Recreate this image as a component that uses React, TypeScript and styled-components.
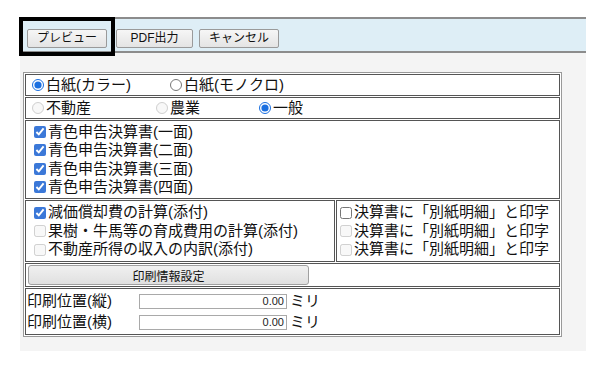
import styled, { createGlobalStyle } from "styled-components"

const GlobalStyle = createGlobalStyle`
  body {
    margin: 0;
    background: #fff;
    font-family: "Liberation Sans", "Noto Sans CJK JP", sans-serif;
    color: #111;
  }
`

const Panel = styled.div`
  margin: 17px 0 0 20px;
  width: 566px;
  background: #f4f4f4;
  padding-bottom: 14px;
`

const Toolbar = styled.div`
  position: relative;
  height: 36px;
  box-sizing: border-box;
  border-top: 2px solid #8c8c8c;
  border-bottom: 2px solid #8c8c8c;
  background: #deeef6;
  display: flex;
  align-items: flex-start;
  padding: 10px 0 0 7px;
`

const ToolButton = styled.button<{ $w: number; $gap: number }>`
  width: ${p => p.$w}px;
  height: 19px;
  margin-right: ${p => p.$gap}px;
  padding: 0;
  border: 1px solid #9a9a9a;
  border-radius: 2px;
  background: linear-gradient(#f6f6f6, #e4e4e4);
  font-family: "Liberation Sans", "Noto Sans CJK JP", sans-serif;
  font-size: 12px;
  line-height: 17px;
  color: #111;
`

const FocusRing = styled.div`
  position: absolute;
  left: -1px;
  top: -2px;
  width: 96px;
  height: 39px;
  box-sizing: border-box;
  border: 4px solid #000;
  pointer-events: none;
`

const Frame = styled.div`
  margin: 19px 0 0 3px;
  width: 539px;
  box-sizing: border-box;
  border: 1px solid #999;
  padding: 1px;
  background: #fff;
  display: flex;
  flex-direction: column;
  gap: 1px;
`

const Row = styled.div<{ $h: number }>`
  display: flex;
  gap: 1px;
  height: ${p => p.$h}px;
`

const Cell = styled.div<{ $w?: number }>`
  ${p => (p.$w ? `width: ${p.$w}px;` : "flex: 1;")}
  box-sizing: border-box;
  border: 1px solid #555;
  display: flex;
  flex-direction: column;
  justify-content: center;
  font-size: 15px;
  line-height: 18.5px;
`

const Line = styled.div`
  display: flex;
  align-items: center;
  white-space: nowrap;
`

const Option = styled.label<{ $w?: number }>`
  display: flex;
  align-items: center;
  ${p => (p.$w ? `width: ${p.$w}px;` : "")}
`

const Radio = styled.input.attrs({ type: "radio" })`
  width: 12px;
  height: 12px;
  margin: 0 2px 0 6px;
  accent-color: #1a6fe0;
`

const Check = styled.input.attrs({ type: "checkbox" })<{ $left?: number }>`
  width: 12px;
  height: 12px;
  margin: 0 2px 0 ${p => p.$left ?? 8}px;
  accent-color: #3b78d8;
`

const WideButton = styled.button`
  margin: 0 0 0 2px;
  width: 281px;
  height: 20px;
  padding: 0;
  border: 1px solid #a0a0a0;
  border-radius: 3px;
  background: linear-gradient(#f0f0f0, #e0e0e0);
  font-family: "Liberation Sans", "Noto Sans CJK JP", sans-serif;
  font-size: 12px;
  color: #111;
`

const FieldLine = styled.div`
  display: flex;
  align-items: center;
  height: 21px;
`

const FieldLabel = styled.span`
  width: 112px;
  padding-left: 1px;
`

const NumBox = styled.div`
  width: 148px;
  height: 15px;
  box-sizing: border-box;
  border: 1px solid #a9a9a9;
  font-size: 11px;
  line-height: 13px;
  text-align: right;
  padding-right: 2px;
  color: #222;
`

const Unit = styled.span`
  margin-left: 3px;
`

const sheets = ["一面", "二面", "三面", "四面"]

export default function App() {
  return (
    <>
      <GlobalStyle />
      <Panel>
        <Toolbar>
          <ToolButton $w={80} $gap={9}>プレビュー</ToolButton>
          <ToolButton $w={77} $gap={6}>PDF出力</ToolButton>
          <ToolButton $w={80} $gap={0}>キャンセル</ToolButton>
          <FocusRing />
        </Toolbar>

        <Frame>
          <Row $h={22}>
            <Cell>
              <Line>
                <Option $w={138}><Radio name="paper" defaultChecked />白紙(カラー)</Option>
                <Option><Radio name="paper" />白紙(モノクロ)</Option>
              </Line>
            </Cell>
          </Row>
          <Row $h={22}>
            <Cell>
              <Line>
                <Option $w={124}><Radio name="kind" disabled />不動産</Option>
                <Option $w={103}><Radio name="kind" disabled />農業</Option>
                <Option><Radio name="kind" defaultChecked />一般</Option>
              </Line>
            </Cell>
          </Row>
          <Row $h={79}>
            <Cell>
              {sheets.map(s => (
                <Line key={s}>
                  <Option><Check defaultChecked />青色申告決算書({s})</Option>
                </Line>
              ))}
            </Cell>
          </Row>
          <Row $h={62}>
            <Cell $w={310}>
              <Line><Option><Check defaultChecked />減価償却費の計算(添付)</Option></Line>
              <Line><Option><Check disabled />果樹・牛馬等の育成費用の計算(添付)</Option></Line>
              <Line><Option><Check disabled />不動産所得の収入の内訳(添付)</Option></Line>
            </Cell>
            <Cell>
              <Line><Option><Check $left={3} />決算書に「別紙明細」と印字</Option></Line>
              <Line><Option><Check $left={3} disabled />決算書に「別紙明細」と印字</Option></Line>
              <Line><Option><Check $left={3} disabled />決算書に「別紙明細」と印字</Option></Line>
            </Cell>
          </Row>
          <Row $h={24}>
            <Cell>
              <WideButton>印刷情報設定</WideButton>
            </Cell>
          </Row>
          <Row $h={47}>
            <Cell>
              <FieldLine>
                <FieldLabel>印刷位置(縦)</FieldLabel>
                <NumBox>0.00</NumBox>
                <Unit>ミリ</Unit>
              </FieldLine>
              <FieldLine>
                <FieldLabel>印刷位置(横)</FieldLabel>
                <NumBox>0.00</NumBox>
                <Unit>ミリ</Unit>
              </FieldLine>
            </Cell>
          </Row>
        </Frame>
      </Panel>
    </>
  )
}
